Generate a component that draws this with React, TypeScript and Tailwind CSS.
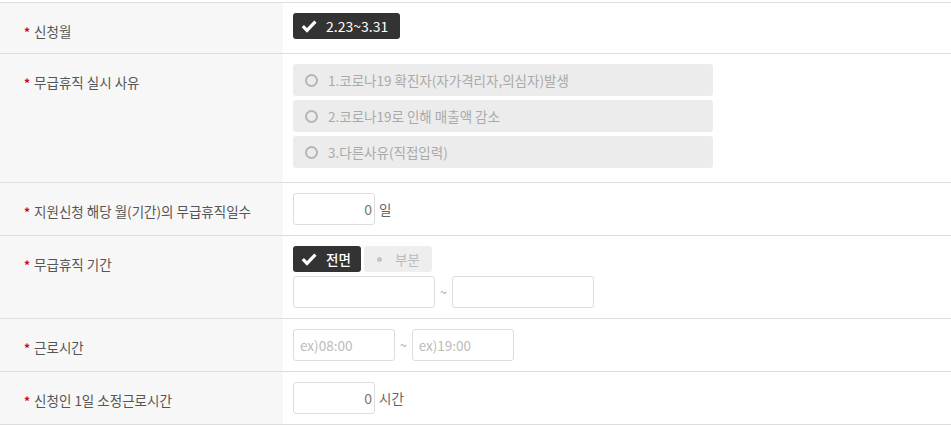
import React from "react";

const font = { fontFamily: '"Noto Sans CJK KR", "Noto Sans", sans-serif' };

function CheckIcon({ className = "" }: { className?: string }) {
  return (
    <svg viewBox="0 0 16 16" className={className} fill="none">
      <path d="M1.8 8.2l4.2 4.2 8.4-8.8" stroke="currentColor" strokeWidth="3.2" strokeLinecap="butt" strokeLinejoin="miter" />
    </svg>
  );
}

function Row({ label, children }: { label: string; children: React.ReactNode }) {
  return (
    <div className="flex border-b border-[#dddddd]">
      <div className="w-[283px] shrink-0 bg-[#f7f7f7] pl-[24px] pt-[19px] text-[13.5px] leading-[18px] text-[#555555]">
        <span className="mr-[4px] text-[12px] font-bold text-[#d0021b]">*</span>
        {label}
      </div>
      <div className="flex-1 px-[10px] py-[10px]">{children}</div>
    </div>
  );
}

function NumberBox({ unit }: { unit: string }) {
  return (
    <div className="flex items-center">
      <div className="flex h-[32px] w-[82px] items-center justify-end rounded-[3px] border border-[#dddddd] bg-white pr-[2px] text-[14px] text-[#777777]">
        0
      </div>
      <span className="ml-[4px] text-[13.5px] text-[#666666]">{unit}</span>
    </div>
  );
}

export default function App() {
  const reasons = [
    "1.코로나19 확진자(자가격리자,의심자)발생",
    "2.코로나19로 인해 매출액 감소",
    "3.다른사유(직접입력)",
  ];

  return (
    <div className="min-h-screen bg-white pt-[2px]" style={font}>
      <div className="border-t border-[#dddddd]">
        <Row label="신청월">
          <div className="mb-[4px] inline-flex h-[26px] items-center rounded-[3px] bg-[#333333] pl-[8px] pr-[12px] text-[14px] text-white">
            <CheckIcon className="mr-[9px] h-[16px] w-[16px]" />
            2.23~3.31
          </div>
        </Row>

        <Row label="무급휴직 실시 사유">
          {reasons.map((r) => (
            <div key={r} className="mb-[4px] flex h-[32px] w-[420px] items-center rounded-[3px] bg-[#ececec] pl-[12px] text-[13.5px] text-[#aaaaaa]">
              <span className="mr-[10px] h-[13px] w-[13px] rounded-full border-2 border-[#b5b5b5]" />
              {r}
            </div>
          ))}
        </Row>

        <Row label="지원신청 해당 월(기간)의 무급휴직일수">
          <NumberBox unit="일" />
        </Row>

        <Row label="무급휴직 기간">
          <div className="mb-[4px] flex gap-[3px]">
            <div className="flex h-[26px] w-[68px] items-center rounded-[3px] bg-[#333333] pl-[8px] text-[13.5px] font-medium text-white">
              <CheckIcon className="mr-[9px] h-[16px] w-[16px]" />
              전면
            </div>
            <div className="flex h-[26px] w-[68px] items-center rounded-[3px] bg-[#eeeeee] pl-[13px] text-[13.5px] text-[#bbbbbb]">
              <span className="mr-[13px] h-[5px] w-[5px] rounded-full bg-[#c4c4c4]" />
              부분
            </div>
          </div>
          <div className="flex items-center">
            <div className="h-[32px] w-[142px] rounded-[3px] border border-[#dddddd] bg-white" />
            <span className="mx-[5px] text-[12px] text-[#999999]">~</span>
            <div className="h-[32px] w-[142px] rounded-[3px] border border-[#dddddd] bg-white" />
          </div>
        </Row>

        <Row label="근로시간">
          <div className="flex items-center">
            <div className="flex h-[32px] w-[102px] items-center rounded-[3px] border border-[#dddddd] bg-white pl-[6px] text-[13.5px] text-[#bbbbbb]">
              ex)08:00
            </div>
            <span className="mx-[5px] text-[12px] text-[#999999]">~</span>
            <div className="flex h-[32px] w-[102px] items-center rounded-[3px] border border-[#dddddd] bg-white pl-[6px] text-[13.5px] text-[#bbbbbb]">
              ex)19:00
            </div>
          </div>
        </Row>

        <Row label="신청인 1일 소정근로시간">
          <NumberBox unit="시간" />
        </Row>
      </div>
    </div>
  );
}
